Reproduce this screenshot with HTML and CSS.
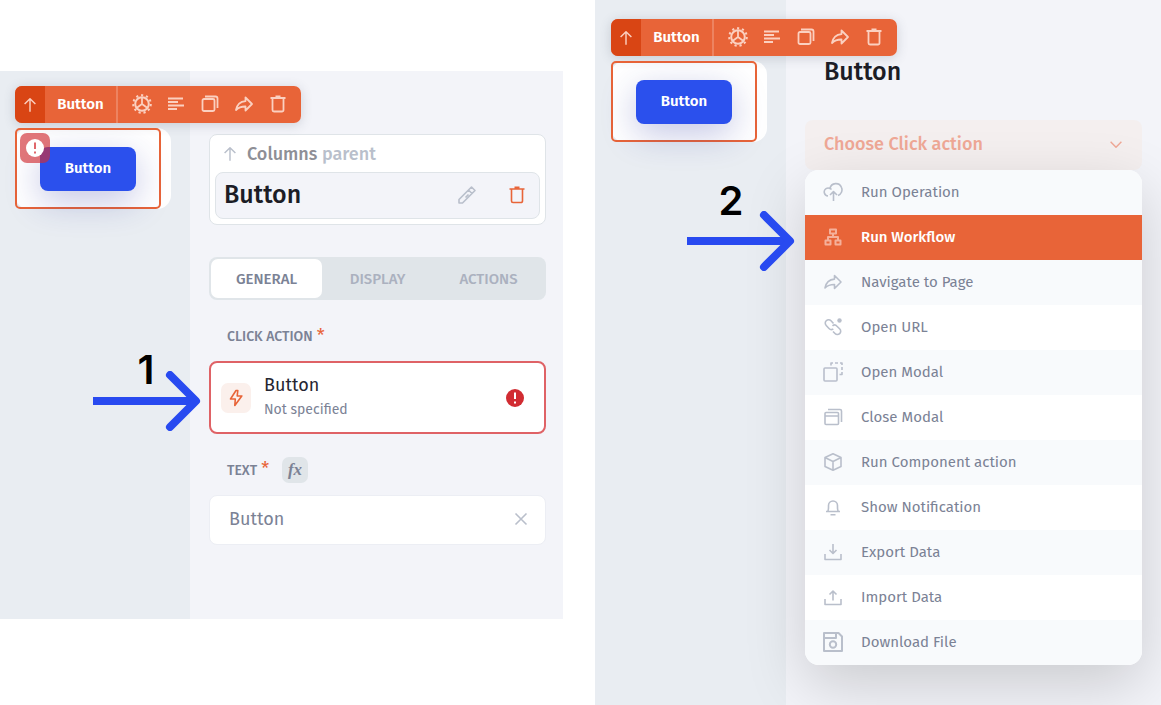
FILE: index.html
```html
<!DOCTYPE html>
<html lang="en">
<head>
<meta charset="utf-8">
<meta name="viewport" content="width=device-width, initial-scale=1">
<title>Button click action</title>
<link rel="stylesheet" href="styles.css">
</head>
<body>
<svg class="sprite" aria-hidden="true">
  <symbol id="up" viewBox="0 0 20 20"><path d="M10 17.500V3M4 9l6-6 6 6"/></symbol>
  <symbol id="gear" viewBox="0 0 20 20"><circle cx="10" cy="10" r="6.800" stroke-width="2"/><circle cx="10" cy="10" r="8.800" stroke-dasharray="2.200 2.826" stroke-width="2"/><path d="M10 3v7l5.500 4M10 10l-5.500 4"/></symbol>
  <symbol id="lines" viewBox="0 0 20 20"><path d="M2 4.500h15M2 8h10M2 11.500h16M2 15h9"/></symbol>
  <symbol id="copy" viewBox="0 0 20 20"><rect x="2.500" y="5" width="12" height="12" rx="1.500"/><path d="M5 2.500h10.500a2 2 0 0 1 2 2V14"/></symbol>
  <symbol id="share" viewBox="0 0 20 20"><path d="M11.500 3.500v3.600C6 7.500 3 10.500 2 16c2.500-2.500 5-3.600 9.500-3.500v4L18 10z"/></symbol>
  <symbol id="trash" viewBox="0 0 20 20"><path d="M2.500 4h15M4.500 4v12a1.500 1.500 0 0 0 1.500 1.500h8a1.500 1.500 0 0 0 1.500-1.500V4"/><path d="M7.500 2.700h5" stroke-width="2.400"/></symbol>
  <symbol id="alert" viewBox="0 0 20 20"><circle cx="10" cy="10" r="9" fill="currentColor" stroke="none"/><path class="mark" d="M10 4.500v6.500M10 13.500v2"/></symbol>
  <symbol id="pencil" viewBox="0 0 20 20"><path d="M2 18v-3.500L14.500 2 18 5.500 5.500 18zM11.500 5l3.500 3.500M8.500 12.500l3-3"/></symbol>
  <symbol id="bolt" viewBox="0 0 20 20"><path d="M10 2.500 4.500 11h4.800l-.5 6.500L15.800 8h-4.600l.6-5.500z"/></symbol>
  <symbol id="close" viewBox="0 0 20 20"><path d="m4.500 4.500 11 11M15.500 4.500l-11 11"/></symbol>
  <symbol id="down" viewBox="0 0 20 20"><path d="m4 7.500 6 6 6-6"/></symbol>
  <symbol id="cloud" viewBox="0 0 20 20"><path d="M5 14A4 4 0 0 1 3 6.700 4 4 0 0 1 7 6.500 6 6 0 0 1 18.500 5.500a6 6 0 0 1-3.500 8M10.500 19v-9M7 13l3.500-3.500L14 13M7 6.500a4 4 0 0 1 1.500 1"/></symbol>
  <symbol id="flow" viewBox="0 0 20 20"><g stroke-width="2"><path d="M7 2.500h6v4H7zM2.500 13.500h5v4h-5zM12.500 13.500h5v4h-5zM10 6.500V10M5 13.500V10h10v3.500"/></g></symbol>
  <symbol id="link" viewBox="0 0 20 20"><path d="M10.500 6.500 8 3.800A3.200 3.200 0 0 0 3.200 8.500L6 11.500a3.200 3.200 0 0 0 4.300.3M10 14.500l2 2a3.200 3.200 0 0 0 4.800-4.500L14 9.200a3.200 3.200 0 0 0-4.500-.4"/><circle cx="16.500" cy="3.500" r="2.200" fill="currentColor" stroke="none"/></symbol>
  <symbol id="open" viewBox="0 0 20 20"><rect x="1" y="6" width="13" height="13" rx="1"/><path d="M8 3.500V1h2M12 1h3M17 1h2v2M19 5v3M19 10v2.500h-2.500"/></symbol>
  <symbol id="windows" viewBox="0 0 20 20"><rect x="2" y="5.500" width="13.500" height="12" rx="1"/><path d="M2 9h13.500M5 2.500h12a1.500 1.500 0 0 1 1.500 1.500v11"/></symbol>
  <symbol id="cube" viewBox="0 0 20 20"><path d="m10 1.800 8 3.700v9l-8 3.700-8-3.700v-9zM2 5.500 10 9.500l8-4M10 9.500v8.700"/></symbol>
  <symbol id="bell" viewBox="0 0 20 20"><path d="M3 14.500h14M4.700 14.500c1-1.500.8-3.500.8-6a4.500 4.500 0 0 1 9 0c0 2.500-.2 4.500.8 6M7.500 17.700h5"/></symbol>
  <symbol id="export" viewBox="0 0 20 20"><path d="M2 12v5.500h16V12M10 2v9.500M6.500 8l3.500 3.500L13.500 8"/></symbol>
  <symbol id="import" viewBox="0 0 20 20"><path d="M2 12v5.500h16V12M10 13.500V4M6.500 7.500 10 4l3.500 3.500"/></symbol>
  <symbol id="disk" viewBox="0 0 20 20"><g stroke-width="2"><path d="M1 1h14.500L19 4.500V19H1zM1 6h12V1"/><circle cx="10" cy="12.500" r="3.200"/></g></symbol>
  <symbol id="arrow" viewBox="0 0 108 60"><path d="M0 30h102"/><path stroke-linecap="round" d="M77 4l26 26-26 26"/></symbol>
</svg>

<main class="steps">
  <section class="step step-first">
    <div class="canvas">
      <div class="widget">
        <div class="toolbar">
          <button class="tool-up" aria-label="Select parent"><svg class="icon small"><use href="#up"/></svg></button>
          <span class="tool-name">Button</span>
          <div class="tools">
            <button aria-label="Settings"><svg class="icon"><use href="#gear"/></svg></button>
            <button aria-label="Align"><svg class="icon"><use href="#lines"/></svg></button>
            <button aria-label="Duplicate"><svg class="icon"><use href="#copy"/></svg></button>
            <button aria-label="Move"><svg class="icon"><use href="#share"/></svg></button>
            <button aria-label="Delete"><svg class="icon"><use href="#trash"/></svg></button>
          </div>
        </div>
        <div class="frame">
          <button class="primary">Button</button>
          <span class="warning"><svg class="icon"><use href="#alert"/></svg></span>
        </div>
      </div>
    </div>
    <div class="panel">
      <div class="component">
        <a class="parent" href="#"><svg class="icon small"><use href="#up"/></svg><span>Columns <span class="muted">parent</span></span></a>
        <div class="current">
          <h2 class="title">Button</h2>
          <button aria-label="Rename"><svg class="icon"><use href="#pencil"/></svg></button>
          <button class="danger" aria-label="Delete component"><svg class="icon"><use href="#trash"/></svg></button>
        </div>
      </div>
      <div class="tabs" role="tablist">
        <button class="tab active" role="tab" aria-selected="true">GENERAL</button>
        <button class="tab" role="tab" aria-selected="false">DISPLAY</button>
        <button class="tab" role="tab" aria-selected="false">ACTIONS</button>
      </div>
      <div class="label" id="action-label">CLICK ACTION<span class="required">*</span></div>
      <button class="action" aria-describedby="action-label">
        <span class="action-icon"><svg class="icon"><use href="#bolt"/></svg></span>
        <span class="action-text"><span class="action-name">Button</span><span class="action-state">Not specified</span></span>
        <svg class="icon invalid"><use href="#alert"/></svg>
      </button>
      <div class="label"><label for="text">TEXT<span class="required">*</span></label><button class="formula" aria-label="Formula">fx</button></div>
      <div class="field">
        <input id="text" type="text" value="Button">
        <button aria-label="Clear"><svg class="icon"><use href="#close"/></svg></button>
      </div>
    </div>
    <div class="note note-first"><span>1</span><svg class="arrow"><use href="#arrow"/></svg></div>
  </section>

  <section class="step step-second">
    <div class="canvas">
      <div class="widget">
        <div class="toolbar">
          <button class="tool-up" aria-label="Select parent"><svg class="icon small"><use href="#up"/></svg></button>
          <span class="tool-name">Button</span>
          <div class="tools">
            <button aria-label="Settings"><svg class="icon"><use href="#gear"/></svg></button>
            <button aria-label="Align"><svg class="icon"><use href="#lines"/></svg></button>
            <button aria-label="Duplicate"><svg class="icon"><use href="#copy"/></svg></button>
            <button aria-label="Move"><svg class="icon"><use href="#share"/></svg></button>
            <button aria-label="Delete"><svg class="icon"><use href="#trash"/></svg></button>
          </div>
        </div>
        <div class="frame"><button class="primary">Button</button></div>
      </div>
    </div>
    <div class="panel">
      <h2 class="title">Button</h2>
      <button class="choose" aria-expanded="true">Choose Click action<svg class="icon small"><use href="#down"/></svg></button>
      <ul class="menu">
        <li><button><svg class="icon"><use href="#cloud"/></svg>Run Operation</button></li>
        <li><button class="selected"><svg class="icon"><use href="#flow"/></svg>Run Workflow</button></li>
        <li><button><svg class="icon"><use href="#share"/></svg>Navigate to Page</button></li>
        <li><button><svg class="icon"><use href="#link"/></svg>Open URL</button></li>
        <li><button><svg class="icon"><use href="#open"/></svg>Open Modal</button></li>
        <li><button><svg class="icon"><use href="#windows"/></svg>Close Modal</button></li>
        <li><button><svg class="icon"><use href="#cube"/></svg>Run Component action</button></li>
        <li><button><svg class="icon"><use href="#bell"/></svg>Show Notification</button></li>
        <li><button><svg class="icon"><use href="#export"/></svg>Export Data</button></li>
        <li><button><svg class="icon"><use href="#import"/></svg>Import Data</button></li>
        <li><button><svg class="icon"><use href="#disk"/></svg>Download File</button></li>
      </ul>
    </div>
    <div class="note note-second"><span>2</span><svg class="arrow"><use href="#arrow"/></svg></div>
  </section>
</main>
</body>
</html>
```
FILE: styles.css
```css
* { box-sizing: border-box; }
body {
  margin: 0;
  background: #fff;
  color: #7b8295;
  font-family: "Fira Sans", "Noto Sans", sans-serif;
  font-size: 15px;
}
button { padding: 0; border: 0; background: none; color: inherit; font: inherit; cursor: pointer; }
h2, ul { margin: 0; padding: 0; }
.sprite { position: absolute; width: 0; height: 0; }
.icon {
  display: block;
  flex: none;
  width: 20px;
  height: 20px;
  fill: none;
  stroke: currentColor;
  stroke-width: 1.6;
  stroke-linejoin: round;
  overflow: visible;
}
.icon.small { width: 18px; height: 18px; }

.steps {
  display: grid;
  grid-template-columns: 563fr 566fr;
  column-gap: 32px;
  align-items: start;
  min-height: 100vh;
}
.step { position: relative; display: grid; background: #f3f4f9; }
.step-first { grid-template-columns: 190px 1fr; margin-top: 71px; }
.step-second { grid-template-columns: 191px 1fr; min-height: 100vh; overflow: hidden; }
.canvas { background: #e9edf2; }
.step-first .canvas { padding: 57px 0 0 15px; }
.step-second .canvas { padding: 61px 0 0 16px; }

.widget { position: relative; z-index: 1; width: 156px; border-radius: 14px; background: #fff; }
.frame {
  position: relative;
  width: 146px;
  padding: 17px 23px 16px;
  border: 2px solid #e86438;
  border-radius: 5px;
}
.primary {
  display: block;
  width: 100%;
  height: 44px;
  padding-bottom: 2px;
  border-radius: 8px;
  background: #2b50ed;
  box-shadow: 0 10px 35px rgba(40, 50, 160, .28);
  color: #fff;
  font-size: 15px;
  font-weight: 600;
}
.warning {
  position: absolute;
  top: 3px;
  left: 3px;
  display: grid;
  place-items: center;
  width: 30px;
  height: 30px;
  border-radius: 7px;
  background: rgba(209, 44, 50, .65);
  color: #fff;
  --mark: #e0676b;
}
.mark { stroke: var(--mark); stroke-width: 2; }
.invalid { color: #d12c32; --mark: #fff; }

.toolbar {
  position: absolute;
  top: -42px;
  left: 0;
  display: flex;
  width: 286px;
  height: 37px;
  overflow: hidden;
  border-radius: 7px;
  background: #e86438;
  color: #fbd0c0;
}
.widget::before {
  content: "";
  position: absolute;
  top: -42px;
  left: 0;
  width: 286px;
  height: 37px;
  border-radius: 7px;
  box-shadow: 0 2px 12px rgba(60, 70, 90, .2);
}
.tool-up { display: grid; place-items: center; width: 30px; background: #d94514; }
.tool-name {
  width: 73px;
  border-right: 2px solid #ed8360;
  color: #fff;
  font-size: 15px;
  font-weight: 600;
  line-height: 37px;
  text-align: center;
}
.tools { display: flex; flex: 1; gap: 14px; padding: 0 0 2px 14px; align-items: center; }
.tools .icon { stroke-width: 1.8; }

.panel { padding: 63px 17px 74px 19px; }
.component { padding: 0 5px 5px; border: 1px solid #dfe4e8; border-radius: 8px; background: #fff; }
.parent {
  display: flex;
  gap: 8px;
  align-items: center;
  height: 37px;
  padding-left: 6px;
  color: #8e8f96;
  font-size: 18px;
  font-weight: 500;
  text-decoration: none;
}
.parent .icon, .muted { color: #b9bfcb; }
.current {
  display: flex;
  gap: 30px;
  align-items: center;
  height: 47px;
  padding: 0 12px 2px 8px;
  border: 1px solid #dfe4e8;
  border-radius: 8px;
  background: #f3f4f9;
  color: #b9bfcb;
}
.title { flex: 1; color: #1c1d26; font-size: 25px; font-weight: 500; line-height: 32px; }
.danger { color: #e86438; }
.tabs { display: flex; margin-top: 32px; padding: 2px; border-radius: 8px; background: #e0e5e9; }
.tab { flex: 1; height: 39px; border-radius: 7px; color: #abb1bf; font-size: 15px; font-weight: 500; }
.tab.active { background: #fff; color: #7b8295; }
.label {
  display: flex;
  align-items: center;
  height: 26px;
  margin: 23px 0 12px 18px;
  font-size: 14px;
  font-weight: 500;
}
.required { padding-left: 4px; color: #e86438; font-size: 18px; font-weight: 400; line-height: 16px; }
.action {
  display: flex;
  align-items: center;
  width: 100%;
  height: 73px;
  padding: 0 19px 0 10px;
  border: 2px solid #df6266;
  border-radius: 8px;
  background: #fff;
  text-align: left;
}
.action-icon {
  display: grid;
  place-items: center;
  width: 30px;
  height: 30px;
  border-radius: 7px;
  background: #fbf0ec;
  color: #e86438;
}
.action-text { display: grid; flex: 1; padding-left: 13px; }
.action-name { color: #252631; font-size: 18px; line-height: 24px; }
.action-state { font-size: 14px; line-height: 25px; }
.formula {
  width: 26px;
  height: 26px;
  margin-left: 13px;
  border-radius: 7px;
  background: #e0e5e9;
  font: italic 700 17px "Liberation Serif", serif;
}
.field {
  display: flex;
  align-items: center;
  height: 50px;
  padding: 0 14px 2px 19px;
  border: 1px solid #eceef4;
  border-radius: 8px;
  background: #fff;
  color: #b9bfcb;
}
.field input {
  flex: 1;
  min-width: 0;
  padding: 0;
  border: 0;
  outline: 0;
  background: none;
  color: #7b8295;
  font: inherit;
  font-size: 18px;
}

.step-second .panel { padding: 56px 19px 40px; }
.step-second .title { padding-left: 19px; }
.choose {
  display: flex;
  justify-content: space-between;
  align-items: center;
  width: 100%;
  height: 50px;
  margin-top: 32px;
  padding: 0 17px 2px 19px;
  border-radius: 8px;
  background: #f4efef;
  color: #efa896;
  font-size: 18px;
  font-weight: 500;
}
.menu {
  position: relative;
  overflow: hidden;
  border-radius: 14px;
  background: #fff;
  box-shadow: 0 20px 60px rgba(0, 0, 0, .17);
  list-style: none;
}
.menu button {
  display: flex;
  gap: 18px;
  align-items: center;
  width: 100%;
  height: 45px;
  padding: 0 0 2px 18px;
}
.menu li:nth-child(odd) { background: #f8fafc; }
.menu .icon { color: #b9bfcb; }
.menu .selected { background: #e86438; color: #fff; font-weight: 500; }
.menu .selected .icon { color: #f5b09a; }

.note { position: absolute; z-index: 2; color: #000; font: 600 40px "Inter", sans-serif; line-height: 48px; pointer-events: none; }
.note span { display: block; width: 88px; text-align: center; }
.note-first { top: 275px; left: 93px; }
.note-first span { width: 106px; }
.note-second { top: 177px; left: 92px; }
.arrow { display: block; width: 108px; height: 60px; fill: none; stroke: #284af0; stroke-width: 8; stroke-linejoin: round; }
.note-first .arrow { margin-top: -23px; }
.note-second .arrow { margin-top: -14px; }
```
